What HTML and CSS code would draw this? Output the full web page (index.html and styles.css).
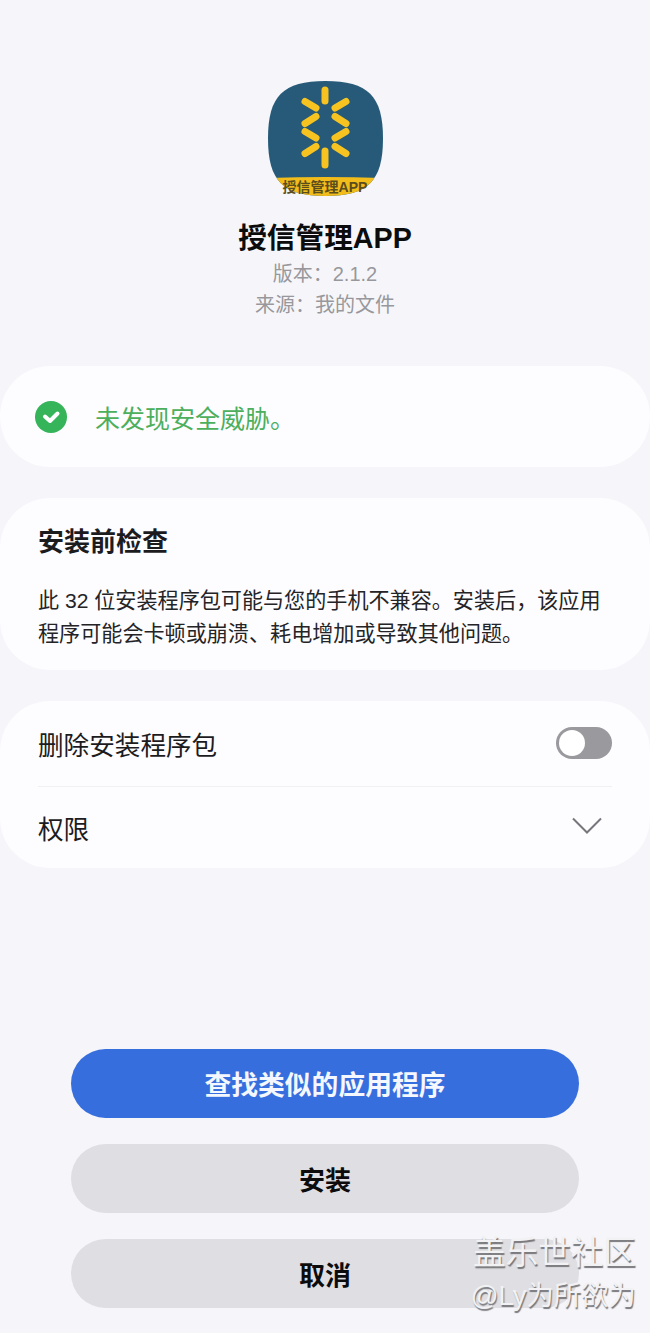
FILE: index.html
```html
<!DOCTYPE html>
<html>
<head>
  <title>授信管理APP</title>
  <link rel="stylesheet" href="styles.css">
</head>
<body>
  <div class="app-info">
    <svg class="app-icon" viewBox="0 0 115 115" width="115" height="115">
      <defs>
        <clipPath id="squircle">
          <path d="M57.5 0C15 0 0 15 0 57.5C0 100 15 115 57.5 115C100 115 115 100 115 57.5C115 15 100 0 57.5 0Z"/>
        </clipPath>
      </defs>
      <g clip-path="url(#squircle)">
        <rect width="115" height="115" fill="#265a78"/>
        <path d="M0 97Q57 95 115 97V115H0Z" fill="#f2bd1b"/>
        <g stroke="#f6c320" stroke-width="7" stroke-linecap="round">
          <path d="M57 9V20"/>
          <path d="M57 70V84"/>
          <path d="M37 20.5L48 27"/>
          <path d="M78 20.5L67 27"/>
          <path d="M37 42.5L48 35.5"/>
          <path d="M78 42.5L67 35.5"/>
          <path d="M37 50.5L48 57"/>
          <path d="M78 50.5L67 57"/>
          <path d="M37 72.5L48 65.5"/>
          <path d="M78 72.5L67 65.5"/>
        </g>
      </g>
    </svg>
    <div class="app-icon-label">授信管理APP</div>
    <h1 class="app-name">授信管理APP</h1>
    <p class="app-meta">版本：2.1.2</p>
    <p class="app-meta">来源：我的文件</p>
  </div>

  <div class="card status-card">
    <svg class="status-icon" viewBox="0 0 32 32" width="32" height="32">
      <circle cx="16" cy="16" r="16" fill="#35b45a"/>
      <path d="M10 15.5L15 20L22.5 12.5" fill="none" stroke="#fff" stroke-width="4" stroke-linecap="round" stroke-linejoin="round"/>
    </svg>
    <span class="status-text">未发现安全威胁。</span>
  </div>

  <div class="card check-card">
    <h2 class="check-title">安装前检查</h2>
    <p class="check-text">此 32 位安装程序包可能与您的手机不兼容。安装后，该应用程序可能会卡顿或崩溃、耗电增加或导致其他问题。</p>
  </div>

  <div class="card options-card">
    <div class="option-row option-first">
      <span>删除安装程序包</span>
      <div class="switch"><div class="switch-knob"></div></div>
    </div>
    <div class="option-row">
      <span>权限</span>
      <svg class="chevron" viewBox="0 0 30 18" width="30" height="18">
        <path d="M1 1.5L15 15.5L29 1.5" fill="none" stroke="#77777b" stroke-width="2"/>
      </svg>
    </div>
  </div>

  <div class="actions">
    <button class="btn btn-primary" type="button">查找类似的应用程序</button>
    <button class="btn" type="button">安装</button>
    <button class="btn" type="button">取消</button>
  </div>

  <div class="watermark">
    <div class="watermark-title">盖乐世社区</div>
    <div class="watermark-user">@Ly为所欲为</div>
  </div>
</body>
</html>
```

FILE: styles.css
```css
html,
body {
  height: 100%;
}

body {
  position: relative;
  display: flex;
  flex-direction: column;
  box-sizing: border-box;
  height: 1333px;
  margin: 0;
  padding: 81px 0 25px;
  overflow: hidden;
  background-color: #f6f6fa;
  color: #1b1b1d;
  font-family: "Liberation Sans", "Noto Sans CJK SC", sans-serif;
}

.app-info {
  position: relative;
  display: flex;
  flex-direction: column;
  align-items: center;
}

.app-icon {
  display: block;
}

.app-icon-label {
  position: absolute;
  top: 98px;
  left: 0;
  right: 0;
  color: #5b4d1c;
  font-size: 14px;
  font-weight: bold;
  line-height: 16px;
  text-align: center;
}

.app-name {
  margin: 24px 0 0;
  color: #0c0c0c;
  font-size: 28.7px;
  font-weight: bold;
  line-height: 36px;
}

.app-meta {
  margin: 0;
  color: #98989c;
  font-size: 20px;
  line-height: 31px;
}

.app-name + .app-meta {
  margin-top: 3px;
}

.card {
  background-color: #fdfcff;
  border-radius: 50px;
}

.status-card {
  display: flex;
  align-items: center;
  box-sizing: border-box;
  height: 101px;
  margin-top: 45px;
  padding-left: 35px;
}

.status-text {
  margin-left: 28px;
  color: #4caf5c;
  font-size: 25px;
}

.check-card {
  box-sizing: border-box;
  height: 172px;
  margin-top: 31px;
  padding: 26px 38px 0;
}

.check-title {
  margin: 0;
  color: #1c1c1e;
  font-size: 26px;
  font-weight: bold;
  line-height: 36px;
}

.check-text {
  margin: 24px 0 0;
  color: #242426;
  font-size: 21.1px;
  line-height: 33px;
}

.options-card {
  display: flex;
  flex-direction: column;
  box-sizing: border-box;
  height: 167px;
  margin-top: 31px;
  padding: 0 38px;
}

.option-row {
  display: flex;
  flex: 1;
  align-items: center;
  justify-content: space-between;
  color: #1c1c1e;
  font-size: 25.6px;
}

.option-first {
  flex: 0 0 85px;
  border-bottom: 1px solid #f0f0f4;
}

.switch {
  box-sizing: border-box;
  width: 56px;
  height: 32px;
  margin-top: -2px;
  padding: 3px;
  background-color: #9a9a9e;
  border-radius: 16px;
}

.switch-knob {
  width: 26px;
  height: 26px;
  background-color: #fff;
  border-radius: 50%;
}

.chevron {
  margin: -4px 10px 0 0;
}

.actions {
  display: flex;
  flex-direction: column;
  gap: 26px;
  margin-top: auto;
  padding: 0 71px;
}

.btn {
  height: 69px;
  padding: 0;
  background-color: #dfdfe3;
  border: none;
  border-radius: 35px;
  color: #0c0c0c;
  font-family: inherit;
  font-size: 26px;
  font-weight: bold;
}

.btn-primary {
  background-color: #376edd;
  color: #f4f7fd;
  font-size: 26.8px;
}

.watermark {
  position: absolute;
  right: 14px;
  bottom: 16px;
  color: #f2f2f4;
  text-align: right;
  text-shadow: 1px 2px 1px #77777b;
}

.watermark-title {
  font-size: 32.6px;
  line-height: 43px;
}

.watermark-user {
  font-size: 27.4px;
  line-height: 43px;
}
```
